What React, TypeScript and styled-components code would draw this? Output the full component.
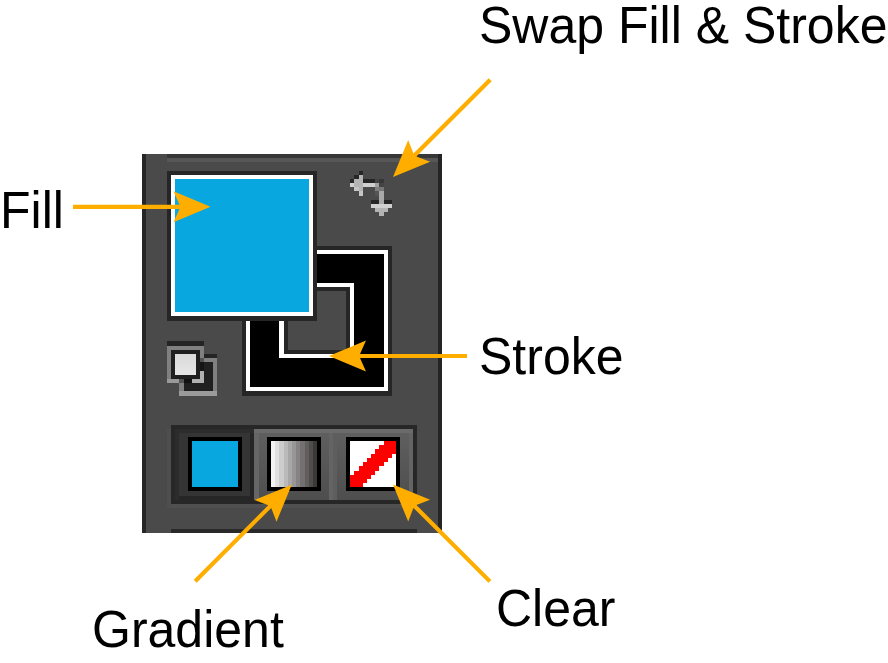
import React from "react";
import styled, { createGlobalStyle } from "styled-components";

const GlobalStyle = createGlobalStyle`
  *, *::before, *::after { box-sizing: border-box; }
  body { margin: 0; background: #fff; }
`;

const Figure = styled.main`
  position: relative;
  width: 888px;
  height: 663px;
  padding: 154px 0 0 142px;
  overflow: hidden;
  background: #fff;
  color: #000;
  font-family: "Liberation Sans", Arial, sans-serif;
`;

const Panel = styled.section`
  display: flex;
  flex-direction: column;
  width: 300px;
  height: 379px;
  border-left: 4px solid #262626;
  border-right: 4px solid #242424;
  background: #4a4a4a;
`;

const TopEdge = styled.div`
  height: 8px;
  margin-left: 21px;
  border-top: 4px solid #373737;
  border-bottom: 4px solid #575757;
`;

const SwatchArea = styled.div`
  position: relative;
  height: 263px;
`;

const StrokeSwatch = styled.div`
  position: absolute;
  left: 96px;
  top: 84px;
  width: 150px;
  height: 150px;
  padding: 29px 30px 29px 29px;
  border: solid #262626;
  border-width: 4px 4px 5px;
  background: #000;
  box-shadow: inset 0 0 0 4px #fff;
`;

const StrokeHole = styled.div`
  width: 75px;
  height: 75px;
  margin: 4px 0 0 4px;
  border: 4px solid #fff;
  border-left-width: 5px;
  background: #4a4a4a;
  box-shadow: inset 0 0 0 4px #262626;
`;

const FillSwatch = styled.div`
  position: absolute;
  left: 21px;
  top: 9px;
  width: 150px;
  height: 150px;
  border: solid #262626;
  border-width: 4px 4px 5px;
  background: #08a7df;
  box-shadow: inset 0 0 0 4px #fff;
`;

const PixelIcon = styled.svg<{ $x: number; $y: number }>`
  position: absolute;
  left: ${(p) => p.$x}px;
  top: ${(p) => p.$y}px;
  display: block;
`;

const ModeBar = styled.div`
  display: grid;
  grid-template-columns: 79px 79px 80px;
  width: 246px;
  height: 79px;
  margin-left: 25px;
  border: 4px solid #272727;
  background: #5a5a5a;
  box-shadow: 0 4px 0 #505050, -4px 4px 0 #4e4e4e;
`;

const ModeButton = styled.div<{ $active?: boolean; $last?: boolean }>`
  display: flex;
  height: 71px;
  padding: ${(p) => (p.$active ? "8px 0 0 13px" : p.$last ? "8px 0 0 13px" : "8px 0 0 13px")};
  background: ${(p) => (p.$active ? "#343434" : "linear-gradient(#606060, #4e4e4e)")};
  border: 0 solid;
  box-shadow: ${(p) =>
    p.$active
      ? "inset 4px 4px 0 #2c2c2c, inset -4px -4px 0 #262626"
      : p.$last
        ? "inset 0 4px 0 #6b6b6b, inset 4px 0 0 #5e5e5e, inset -4px 0 0 #646464"
        : "inset 0 4px 0 #6b6b6b, inset 5px 0 0 #666, inset -4px 0 0 #646464"};
`;

const ModeSwatch = styled.div<{ $paint: string }>`
  width: 54px;
  height: 54px;
  border: 4px solid #000;
  background: ${(p) => p.$paint};
`;

const BottomEdge = styled.div`
  width: 246px;
  height: 4px;
  margin: auto 0 0 25px;
  background: #292929;
`;

const Label = styled.span<{ $x: number; $baseline: number }>`
  position: absolute;
  left: ${(p) => p.$x}px;
  top: ${(p) => p.$baseline - 42}px;
  font-size: 50px;
  line-height: 50px;
  white-space: nowrap;
  transform: scaleY(1.045);
  transform-origin: 0 42px;
`;

const Arrows = styled.svg`
  position: absolute;
  left: 0;
  top: 0;
  display: block;
`;

type Cell = [number, number, number, number, string];

const Pixels = ({ cells }: { cells: Cell[] }) => (
  <g shapeRendering="crispEdges">
    {cells.map(([x, y, w, h, c], i) => (
      <rect key={i} x={x} y={y} width={w} height={h} fill={c} />
    ))}
  </g>
);

const swapCells: Cell[] = [
  [9, 0, 4, 4, "#262626"],
  [4, 4, 5, 4, "#262626"],
  [0, 8, 4, 4, "#262626"],
  [13, 8, 12, 4, "#252525"],
  [25, 8, 4, 4, "#444"],
  [29, 8, 5, 4, "#373737"],
  [9, 4, 4, 21, "#b4b4b4"],
  [4, 8, 5, 12, "#b4b4b4"],
  [0, 12, 4, 4, "#cfcfcf"],
  [4, 16, 5, 4, "#c5c5c5"],
  [9, 20, 4, 5, "#c5c5c5"],
  [13, 12, 12, 4, "#d0d0d0"],
  [25, 12, 4, 4, "#a0a0a0"],
  [29, 12, 5, 4, "#444"],
  [25, 16, 4, 4, "#808080"],
  [29, 16, 5, 4, "#777"],
  [29, 20, 5, 13, "#a9a9a9"],
  [25, 20, 4, 5, "#555"],
  [21, 29, 8, 4, "#252525"],
  [34, 29, 8, 4, "#252525"],
  [21, 33, 21, 4, "#d0d0d0"],
  [25, 37, 13, 4, "#b4b4b4"],
  [29, 41, 5, 4, "#b4b4b4"],
];

const defaultCells: Cell[] = [
  [37, 13, 13, 4, "#242424"],
  [12, 17, 38, 38, "#808080"],
  [12, 50, 38, 5, "#9b9b9b"],
  [17, 21, 29, 29, "#202020"],
  [0, 0, 37, 5, "#242424"],
  [0, 5, 37, 37, "#808080"],
  [0, 38, 12, 4, "#999"],
  [12, 38, 5, 4, "#535353"],
  [17, 38, 8, 4, "#111"],
  [25, 38, 12, 4, "#b0b0b0"],
  [33, 30, 4, 12, "#b0b0b0"],
  [33, 21, 4, 9, "#151515"],
  [33, 17, 4, 4, "#535353"],
  [4, 9, 29, 29, "#1f1f1f"],
];

const slashCells: Cell[] = [
  [34, 0, 12, 4, "#f00"],
  [29, 4, 17, 4, "#f00"],
  [25, 8, 21, 5, "#f00"],
  [21, 13, 21, 4, "#f00"],
  [17, 17, 21, 4, "#f00"],
  [13, 21, 21, 4, "#f00"],
  [9, 25, 20, 5, "#f00"],
  [4, 30, 21, 4, "#f00"],
  [0, 34, 21, 4, "#f00"],
  [0, 38, 17, 4, "#f00"],
  [0, 42, 13, 4, "#f00"],
];

const bands: [string, number][] = [
  ["#f4f4f4", 4], ["#e0e0e0", 8], ["#cdcdcd", 13], ["#bababa", 17],
  ["#a8a8a8", 21], ["#999697", 25], ["#868384", 29], ["#747071", 34],
  ["#625e5f", 38], ["#504b4c", 42], ["#3d3738", 46],
];
const gradientPaint = `linear-gradient(90deg, ${bands
  .map(([c, end], i) => `${c} ${i ? bands[i - 1][1] : 0}px ${end}px`)
  .join(", ")})`;

interface ArrowProps {
  tip: [number, number];
  angle: number;
  length: number;
}

const Arrow = ({ tip, angle, length }: ArrowProps) => (
  <g transform={`translate(${tip[0]} ${tip[1]}) rotate(${angle})`} fill="#ffae00">
    <path d={`M${-length} -2.1H-31L-37 -15.5L0 0L-37 15.5L-31 2.1H${-length}Z`} />
  </g>
);

export default function App() {
  return (
    <>
      <GlobalStyle />
      <Figure>
        <Panel>
          <TopEdge />
          <SwatchArea>
            <StrokeSwatch>
              <StrokeHole />
            </StrokeSwatch>
            <FillSwatch />
            <PixelIcon $x={204} $y={9} width={42} height={45}>
              <Pixels cells={swapCells} />
            </PixelIcon>
            <PixelIcon $x={21} $y={179} width={50} height={55}>
              <Pixels cells={defaultCells} />
              <defs>
                <linearGradient id="page" x2="0" y2="1">
                  <stop stopColor="#dadada" />
                  <stop offset="1" stopColor="#e6e6e6" />
                </linearGradient>
              </defs>
              <rect x={8} y={13} width={21} height={21} fill="url(#page)" />
            </PixelIcon>
          </SwatchArea>
          <ModeBar>
            <ModeButton $active>
              <ModeSwatch $paint="#08a7df" />
            </ModeButton>
            <ModeButton>
              <ModeSwatch $paint={gradientPaint} />
            </ModeButton>
            <ModeButton $last>
              <ModeSwatch $paint="#fff">
                <svg width={46} height={46} display="block">
                  <Pixels cells={slashCells} />
                </svg>
              </ModeSwatch>
            </ModeButton>
          </ModeBar>
          <BottomEdge />
        </Panel>
        <Arrows width={888} height={663}>
          <Arrow tip={[210.5, 206.8]} angle={0} length={137.5} />
          <Arrow tip={[329, 356]} angle={180} length={138} />
          <Arrow tip={[393, 177]} angle={135} length={137.5} />
          <Arrow tip={[291.7, 484.7]} angle={-45} length={136.5} />
          <Arrow tip={[393, 484.5]} angle={-135} length={137} />
        </Arrows>
        <Label $x={479} $baseline={43}>Swap Fill &amp; Stroke</Label>
        <Label $x={0} $baseline={228}>Fill</Label>
        <Label $x={479} $baseline={374}>Stroke</Label>
        <Label $x={92} $baseline={647}>Gradient</Label>
        <Label $x={496} $baseline={626}>Clear</Label>
      </Figure>
    </>
  );
}
